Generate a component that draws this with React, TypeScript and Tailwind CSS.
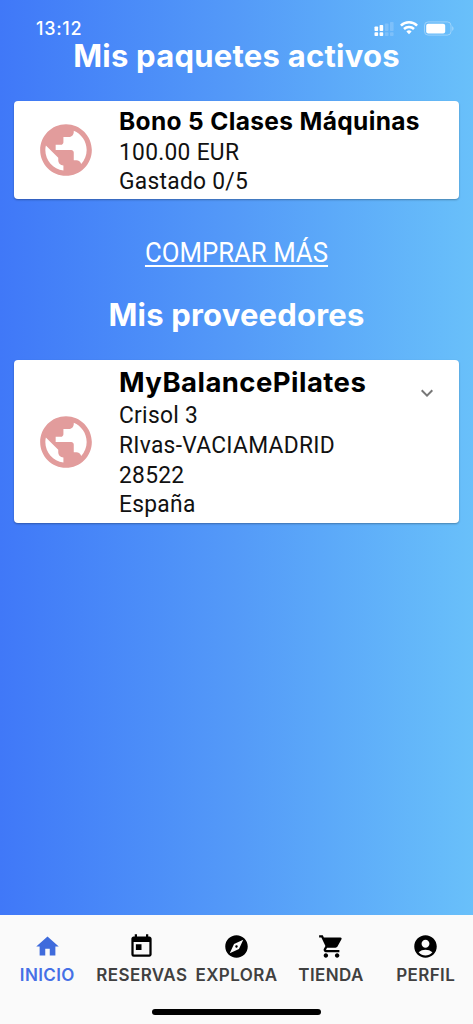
import type { ReactNode } from "react";
import type { IconType } from "react-icons";
import {
  MdAccountCircle,
  MdExplore,
  MdHome,
  MdKeyboardArrowDown,
  MdPublic,
  MdShoppingCart,
  MdToday,
} from "react-icons/md";

// ─── Types ──────────────────────────────────────────────────────

interface Tab {
  label: string;
  icon: IconType;
  active?: boolean;
}

const tabs: Tab[] = [
  { label: "INICIO", icon: MdHome, active: true },
  { label: "RESERVAS", icon: MdToday },
  { label: "EXPLORA", icon: MdExplore },
  { label: "TIENDA", icon: MdShoppingCart },
  { label: "PERFIL", icon: MdAccountCircle },
];

const providerLines = ["Crisol 3", "RIvas-VACIAMADRID", "28522", "España"];

// ─── Status bar ─────────────────────────────────────────────────

function StatusBar() {
  return (
    <div className="flex h-[39px] items-start justify-between pt-[18px] pr-[19px] pl-9 text-white">
      <span className="text-[18px] leading-[21px] font-medium tracking-[0.7px]">13:12</span>
      <div className="flex items-center pt-0.5">
        {/* Dual SIM signal */}
        <svg className="h-4 w-5" viewBox="0 0 20 16" fill="currentColor">
          <rect x="0.5" y="5.5" width="3.6" height="4.5" rx="0.8" />
          <rect x="5.6" y="4" width="3.6" height="6" rx="0.8" />
          <rect x="10.9" y="2.5" width="3.6" height="7.5" rx="0.8" opacity="0.18" />
          <rect x="16" y="1" width="3.6" height="9" rx="0.8" opacity="0.18" />
          <rect x="0.5" y="11.3" width="3.6" height="3.8" rx="0.8" />
          <rect x="5.6" y="11.3" width="3.6" height="3.8" rx="0.8" />
          <rect x="10.9" y="11.3" width="3.6" height="3.8" rx="0.8" opacity="0.18" />
          <rect x="16" y="11.3" width="3.6" height="3.8" rx="0.8" opacity="0.18" />
        </svg>
        <svg className="mr-px mb-0.5 ml-1.5 h-[15px] w-[18px]" viewBox="0 0 18 15" fill="none" stroke="currentColor" strokeWidth="2.5">
          <path d="M0.9 5.6a11.5 11.5 0 0 1 16.2 0" />
          <path d="M4 9a7.1 7.1 0 0 1 10 0" />
          <path d="M9 14.2 6.4 11.5a3.8 3.8 0 0 1 5.2 0Z" fill="currentColor" stroke="none" />
        </svg>
        <svg className="mb-px ml-[5px] h-[15px] w-[30px]" viewBox="0 0 30 15">
          <rect x="0.5" y="0.9" width="26.5" height="13.2" rx="3.6" fill="none" stroke="white" strokeOpacity="0.35" />
          <rect x="2.2" y="2.7" width="19" height="9.8" rx="2" fill="white" />
          <path d="M28.3 5.2v4.6c1.5-.6 1.5-4 0-4.600Z" fill="white" fillOpacity="0.45" />
        </svg>
      </div>
    </div>
  );
}

// ─── Cards ──────────────────────────────────────────────────────

function Card({ className, children }: { className: string; children: ReactNode }) {
  return (
    <div className={`mx-3.5 flex rounded bg-white shadow-[0_1px_2px_rgba(0,0,0,0.3)] ${className}`}>
      <div className="flex w-[105px] shrink-0 items-center justify-center pr-px">
        <MdPublic className="h-[62px] w-[62px] text-[#e29c9c]" />
      </div>
      <div className="flex-1 pt-[5px] whitespace-nowrap">{children}</div>
    </div>
  );
}

function Line({ children }: { children: ReactNode }) {
  return (
    <p className="origin-left scale-x-[0.93] font-['Roboto',sans-serif] text-[24.5px] leading-[29.8px] tracking-[0.3px] text-[#111]">
      {children}
    </p>
  );
}

function TabItem({ tab }: { tab: Tab }) {
  const Icon = tab.icon;
  return (
    <button className="flex w-[94.6px] flex-col items-center whitespace-nowrap">
      <Icon className={`h-[27px] w-[27px] ${tab.active ? "text-[#3f6bdc]" : "text-black"}`} />
      <span
        className={`mt-1 text-[17px] leading-[22px] font-semibold tracking-[0.4px] ${
          tab.active ? "text-[#4570e6]" : "text-[#404040]"
        }`}
      >
        {tab.label}
      </span>
    </button>
  );
}

// ─── Main Component ─────────────────────────────────────────────

export default function App() {
  return (
    <div className="flex h-[1024px] w-[473px] flex-col overflow-hidden bg-linear-to-r from-[#4078f8] via-[#549af8] to-[#69c0fa] font-['Inter',sans-serif]">
      <StatusBar />

      <main className="flex-1">
        <h1 className="text-center text-[31px] leading-[34px] font-bold tracking-[0.25px] text-white">
          Mis paquetes activos
        </h1>

        <Card className="mt-[27.5px] h-[98px]">
          <p className="text-[24.5px] leading-[31px] font-bold tracking-[0.35px] text-black">Bono 5 Clases Máquinas</p>
          <Line>100.00 EUR</Line>
          <Line>Gastado 0/5</Line>
        </Card>

        <div className="mt-[38px] flex h-8 justify-center font-['Roboto',sans-serif] text-[28px] text-white">
          <a className="h-[30px] scale-x-[0.92] border-b-[2.5px] border-white leading-[31px]">COMPRAR MÁS</a>
        </div>

        <h2 className="mt-[28.5px] text-center text-[31px] leading-[36px] font-bold tracking-[0.2px] text-white">
          Mis proveedores
        </h2>

        <Card className="relative mt-[27px] h-[163px]">
          <p className="text-[27.5px] leading-[35px] font-bold tracking-[0.45px] text-black">MyBalancePilates</p>
          {providerLines.map((line) => (
            <Line key={line}>{line}</Line>
          ))}
          <MdKeyboardArrowDown className="absolute top-[21px] right-5 h-6 w-6 text-[#777]" />
        </Card>
      </main>

      <nav className="flex h-[109px] flex-col items-center bg-[#fafafa] pt-[18px]">
        <div className="flex w-full">
          {tabs.map((tab) => (
            <TabItem key={tab.label} tab={tab} />
          ))}
        </div>
        <div className="mt-[23px] h-1.5 w-[169px] rounded-full bg-black" />
      </nav>
    </div>
  );
}
